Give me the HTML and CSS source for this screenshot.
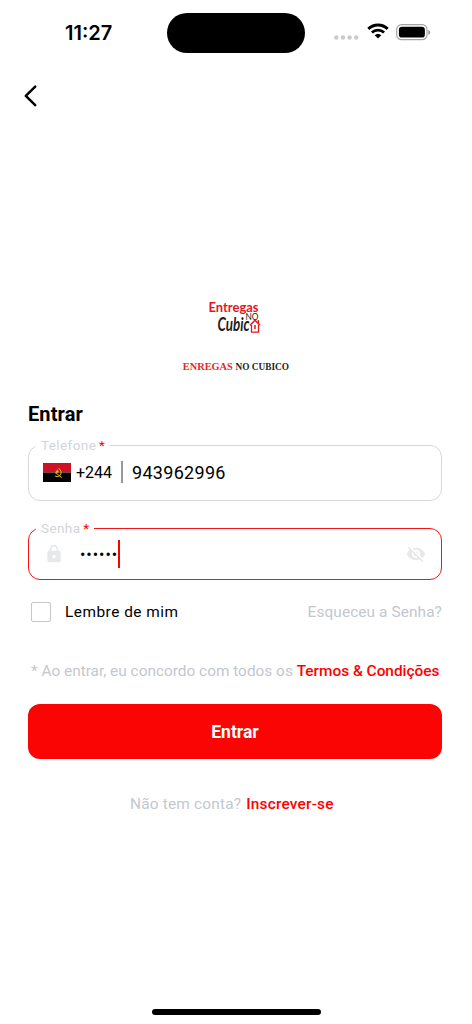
FILE: index.html
```html
<!DOCTYPE html>
<html lang="pt">
<head>
<meta charset="utf-8">
<title>Entrar</title>
<link rel="stylesheet" href="styles.css">
</head>
<body>
<div class="screen">
    <div class="status">
        <div class="time">11:27</div>
        <div class="island"></div>
        <div class="signs">
            <svg class="dots" width="25" height="5" viewBox="0 0 25 5" fill="#cbcbcb">
                <circle cx="2.3" cy="2.5" r="2.2"/><circle cx="9" cy="2.5" r="2.2"/><circle cx="15.6" cy="2.5" r="2.2"/><circle cx="22.2" cy="2.5" r="2.2"/>
            </svg>
            <svg class="wifi" width="22" height="16" viewBox="0 0 22 16" fill="none" stroke="#000">
                <path d="M1.3 5.9a14 14 0 0 1 19.4 0" stroke-width="2.9"/>
                <path d="M4.9 9.6a8.8 8.8 0 0 1 12.2 0" stroke-width="2.8"/>
                <path d="M11 15.6 7.7 12.3a4.8 4.8 0 0 1 6.6 0z" fill="#000" stroke="none"/>
            </svg>
            <svg class="battery" width="36" height="17" viewBox="0 0 36 17">
                <rect x=".7" y=".7" width="30.3" height="15" rx="4.8" fill="#fff" stroke="#a3a3a3" stroke-width="1.2"/>
                <rect x="2.9" y="2.8" width="26" height="10.8" rx="3.2"/>
                <path d="M32.4 5.9c2.3.7 2.3 4.1 0 4.8z" fill="#8c8c8c"/>
            </svg>
        </div>
    </div>
    <a class="back">
        <svg width="13" height="22" viewBox="0 0 13 22" fill="none" stroke="#000" stroke-width="2.5" stroke-linecap="round" stroke-linejoin="round"><path d="M11.2 1.6 1.8 10.8l9.4 9.4"/></svg>
    </a>

    <div class="logo">
        <svg width="112" height="80" viewBox="0 0 112 80">
            <text class="logo-top" x="26.5" y="14" textLength="50" lengthAdjust="spacingAndGlyphs">Entregas</text>
            <text class="logo-no" x="63.5" y="22" textLength="13" lengthAdjust="spacingAndGlyphs">NO</text>
            <text class="logo-main" x="35.5" y="32.5" textLength="32" lengthAdjust="spacingAndGlyphs">Cubic</text>
            <g fill="none" stroke="#e8141c">
                <path d="M68 27.2l5-4.900 5 4.900" stroke-width="1.5"/>
                <path d="M69.500 27v7.200h7V27" stroke-width="1.3"/>
                <path d="M73 27v4" stroke-width="1.5"/>
                <path d="M76.300 25v-3" stroke-width="1.3"/>
            </g>
            <text class="logo-name" x="0.8" y="72" textLength="50" lengthAdjust="spacingAndGlyphs" fill="#e8252b">ENREGAS</text>
            <text class="logo-name" x="53.5" y="72" textLength="53.5" lengthAdjust="spacingAndGlyphs" fill="#24242c">NO CUBICO</text>
        </svg>
    </div>

    <h1>Entrar</h1>
    <fieldset class="field phone">
        <legend>Telefone <span class="req">*</span></legend>
        <svg class="flag" width="28" height="19" viewBox="0 0 28 19">
            <path d="M0 0h28v9.5H0z" fill="#ce1126"/>
            <path d="M0 9.5h28V19H0z"/>
            <g fill="none" stroke="#e0c414">
                <path d="M15.5 5.4a4.3 4.3 0 0 1 .9 7.4c-1.5 1.100-3.300.9-4.500.1" stroke-width="1"/>
                <path d="M12 9.5l6.8 5" stroke-width="1"/>
            </g>
            <path d="M14.2 6.3l.6 1.5h1.5l-1.2 1 .5 1.5-1.4-.9-1.3.9.5-1.5-1.2-1h1.5z" fill="#e0c414"/>
        </svg>
        <span class="code">+244</span>
        <span class="line"></span>
        <span class="number">943962996</span>
    </fieldset>
    <fieldset class="field password">
        <legend>Senha <span class="req">*</span></legend>
        <svg class="lock" width="20" height="20" viewBox="0 0 24 24" fill="#e7e8ea"><path d="M18 8h-1V6c0-2.76-2.24-5-5-5S7 3.240 7 6v2H6c-1.100 0-2 .9-2 2v10c0 1.100.9 2 2 2h12c1.100 0 2-.9 2-2V10c0-1.100-.9-2-2-2zm-6 9c-1.100 0-2-.9-2-2s.9-2 2-2 2 .9 2 2-.9 2-2 2zm3.100-9H8.900V6c0-1.710 1.390-3.100 3.100-3.100s3.100 1.390 3.100 3.100v2z"/></svg>
        <span class="secret">••••••</span>
        <span class="caret"></span>
        <svg class="eye" width="20" height="20" viewBox="0 0 24 24" fill="#e7e8ea"><path d="M12 7c2.760 0 5 2.240 5 5 0 .65-.13 1.260-.36 1.830l2.920 2.920c1.510-1.260 2.700-2.890 3.430-4.750-1.730-4.390-6-7.500-11-7.500-1.400 0-2.740.25-3.980.7l2.160 2.160C10.740 7.130 11.350 7 12 7zM2 4.270l2.280 2.280.46.46C3.080 8.300 1.780 10.020 1 12c1.730 4.390 6 7.500 11 7.500 1.550 0 3.030-.3 4.380-.84l.42.42L19.730 22 21 20.730 3.270 3 2 4.270zM7.530 9.800l1.550 1.550c-.05.21-.08.43-.08.65 0 1.660 1.340 3 3 3 .22 0 .44-.03.65-.08l1.550 1.550c-.67.33-1.410.53-2.200.53-2.760 0-5-2.240-5-5 0-.79.2-1.530.53-2.200zm4.310-.78l3.150 3.150.02-.16c0-1.660-1.340-3-3-3l-.17.01z"/></svg>
    </fieldset>

    <div class="options">
        <span class="box"></span>
        <span class="remember">Lembre de mim</span>
        <a class="forgot">Esqueceu a Senha?</a>
    </div>
    <p class="terms">* Ao entrar, eu concordo com todos os <a>Termos &amp; Condições</a></p>
    <button class="enter">Entrar</button>
    <p class="signup">Não tem conta? <a>Inscrever-se</a></p>
    <div class="home"></div>
</div>
</body>
</html>
```
FILE: styles.css
```css
* {
    margin: 0;
    padding: 0;
    box-sizing: border-box;
}

body {
    background: #fff;
    color: #000;
    font-family: Roboto, "Liberation Sans", sans-serif;
    font-size: 15.4px;
}

svg {
    display: block;
    flex: none;
    overflow: visible;
}

.screen {
    width: 472px;
    height: 1024px;
    padding: 0 30px 9px 28px;
    display: flex;
    flex-direction: column;
    overflow: hidden;
}

.status {
    display: flex;
    height: 85px;
    padding-top: 13px;
}

.time {
    width: 139px;
    padding-left: 37px;
    font: 600 20px/40px Inter, sans-serif;
}

.island {
    width: 138px;
    height: 40px;
    border-radius: 20px;
    background: #000;
}

.signs {
    display: flex;
    padding: 11px 0 0 29px;
}

.dots {
    margin-top: 11px;
}

.wifi {
    margin: -1px 0 0 8px;
}

.battery {
    margin-left: 7px;
}

.back {
    height: 22px;
    margin-left: -4px;
}

.logo {
    height: 80px;
    margin: 191px 0 0 154px;
}

.logo-top {
    font: 700 14px Lato, sans-serif;
    fill: #e8141c;
}

.logo-no {
    font: 400 9px Lato, sans-serif;
    fill: #222;
}

.logo-main {
    font: italic 700 18px Lato, sans-serif;
    fill: #1c1c1c;
}

.logo-name {
    font: 700 10.5px "Liberation Serif", serif;
}

h1 {
    height: 30px;
    margin-top: 21px;
    font-size: 20px;
    line-height: 30px;
    font-weight: 700;
    letter-spacing: 0.1px;
}

.field {
    width: 414px;
    border: 1px solid #d6d8dc;
    border-radius: 12px;
    display: flex;
    align-items: center;
}

.field legend {
    height: 16px;
    padding: 0 5px;
    color: #d2d5da;
    font-size: 13.5px;
    line-height: 16px;
    letter-spacing: 0.4px;
}

.req {
    color: #f00;
    margin-left: -1px;
}

.phone {
    height: 64px;
    margin-top: 8px;
    padding: 8px 14px 0;
}

.phone legend {
    margin-left: -7px;
}

.code {
    margin-left: 5px;
    width: 45px;
    font-size: 16px;
}

.line {
    width: 2px;
    height: 22px;
    background: #999;
}

.number {
    margin-left: 9px;
    font-size: 18px;
    letter-spacing: 0.3px;
}

.password {
    height: 60px;
    margin-top: 19px;
    padding: 4px 15px 0;
    border-color: #f51414;
}

.password legend {
    margin-left: -8px;
}

.secret {
    margin-left: 16px;
    font-size: 16px;
    letter-spacing: 0.95px;
}

.caret {
    width: 2px;
    height: 28px;
    background: #f00;
}

.eye {
    margin-left: auto;
}

.options {
    display: flex;
    align-items: center;
    width: 414px;
    height: 24px;
    margin-top: 20px;
}

.box {
    width: 20px;
    height: 20px;
    margin-left: 3px;
    border: 1px solid #c3c7ce;
    border-radius: 2px;
}

.remember {
    margin-left: 14px;
    letter-spacing: 0.5px;
}

.forgot {
    margin-left: auto;
    color: #c3c7ce;
    letter-spacing: 0.1px;
}

.terms,
.signup {
    color: #c3c7ce;
    line-height: 20px;
    white-space: nowrap;
}

.terms {
    margin: 37px 0 0 3px;
}

.terms a,
.signup a {
    color: #f00;
    font-weight: 500;
}

.enter {
    width: 414px;
    height: 55px;
    margin-top: 23px;
    border: 0;
    border-radius: 12px;
    background: #fb0404;
    color: #fff;
    font: 700 17.5px Roboto, sans-serif;
}

.signup {
    margin: 35px 0 0 102px;
    letter-spacing: 0.2px;
}

.signup a {
    margin-left: 1px;
}

.home {
    width: 169px;
    height: 6px;
    margin: auto 0 0 124px;
    border-radius: 3px;
    background: #000;
}
```
